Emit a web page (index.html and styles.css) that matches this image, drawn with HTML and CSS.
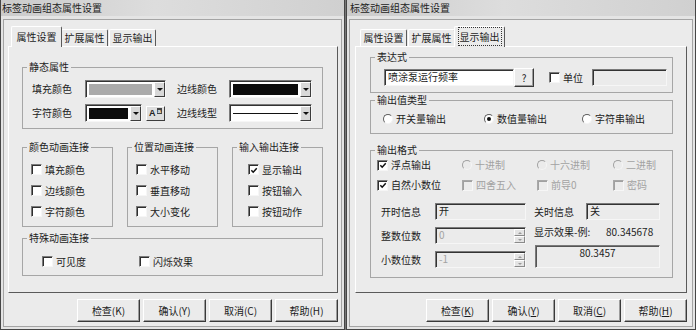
FILE: index.html
```html
<!DOCTYPE html>
<html lang="zh-CN">
<head>
    <meta charset="UTF-8">
    <meta name="viewport" content="width=device-width, initial-scale=1.0">
    <title>标签动画组态属性设置</title>
    <link rel="stylesheet" href="styles.css">
</head>
<body>
<div id="screen">
    <!-- 属性设置 -->
    <div class="win win-left">
        <div class="titlebar">标签动画组态属性设置</div>
        <div class="client">
            <ul class="tabs">
                <li class="tab on">属性设置</li>
                <li class="tab">扩展属性</li>
                <li class="tab">显示输出</li>
            </ul>
            <div class="panel">
                <fieldset class="grp">
                    <legend>静态属性</legend>
                    <div class="static-grid">
                        <span>填充颜色</span>
                        <div class="combo"><span class="swatch fill-gray"></span><span class="drop"></span></div>
                        <span class="lab2">边线颜色</span>
                        <div class="combo"><span class="swatch fill-black"></span><span class="drop"></span></div>
                        <span>字符颜色</span>
                        <div class="combo-wrap">
                            <div class="combo short"><span class="swatch fill-black"></span><span class="drop"></span></div>
                            <button class="abtn">A<span class="sup">a</span></button>
                        </div>
                        <span class="lab2">边线线型</span>
                        <div class="combo"><span class="swatch fill-line"></span><span class="drop"></span></div>
                    </div>
                </fieldset>
                <div class="grp-row">
                    <fieldset class="grp">
                        <legend>颜色动画连接</legend>
                        <div class="chk-list">
                            <label class="chk"><i class="box"></i>填充颜色</label>
                            <label class="chk"><i class="box"></i>边线颜色</label>
                            <label class="chk"><i class="box"></i>字符颜色</label>
                        </div>
                    </fieldset>
                    <fieldset class="grp">
                        <legend>位置动画连接</legend>
                        <div class="chk-list">
                            <label class="chk"><i class="box"></i>水平移动</label>
                            <label class="chk"><i class="box"></i>垂直移动</label>
                            <label class="chk"><i class="box"></i>大小变化</label>
                        </div>
                    </fieldset>
                    <fieldset class="grp">
                        <legend>输入输出连接</legend>
                        <div class="chk-list io">
                            <label class="chk"><i class="box"><svg viewBox="0 0 9 9"><path d="M1.5 4.2 L3.6 6.4 L7.6 2" fill="none" stroke="#111" stroke-width="1.7"/></svg></i>显示输出</label>
                            <label class="chk"><i class="box"></i>按钮输入</label>
                            <label class="chk"><i class="box"></i>按钮动作</label>
                        </div>
                    </fieldset>
                </div>
                <fieldset class="grp special">
                    <legend>特殊动画连接</legend>
                    <div class="special-row">
                        <label class="chk"><i class="box"></i>可见度</label>
                        <label class="chk"><i class="box"></i>闪烁效果</label>
                    </div>
                </fieldset>
            </div>
            <div class="btns">
                <button class="btn">检查(K)</button>
                <button class="btn">确认(Y)</button>
                <button class="btn">取消(C)</button>
                <button class="btn">帮助(H)</button>
            </div>
        </div>
    </div>

    <!-- 显示输出 -->
    <div class="win win-right">
        <div class="titlebar">标签动画组态属性设置</div>
        <div class="client">
            <ul class="tabs">
                <li class="tab">属性设置</li>
                <li class="tab">扩展属性</li>
                <li class="tab on"><span class="focus">显示输出</span></li>
            </ul>
            <div class="panel panel-r">
                <fieldset class="grp">
                    <legend>表达式</legend>
                    <div class="expr-row">
                        <div class="field expr">喷涂泵运行频率</div>
                        <button class="qbtn">?</button>
                        <label class="chk unit-chk"><i class="box"></i>单位</label>
                        <div class="field gray unit"></div>
                    </div>
                </fieldset>
                <fieldset class="grp type">
                    <legend>输出值类型</legend>
                    <div class="radio-row">
                        <label class="rad"><i class="dot"></i>开关量输出</label>
                        <label class="rad"><i class="dot on"></i>数值量输出</label>
                        <label class="rad"><i class="dot"></i>字符串输出</label>
                    </div>
                </fieldset>
                <fieldset class="grp fmt">
                    <legend>输出格式</legend>
                    <div class="fmt-checks">
                        <label class="chk"><i class="box"><svg viewBox="0 0 9 9"><path d="M1.5 4.2 L3.6 6.4 L7.6 2" fill="none" stroke="#111" stroke-width="1.7"/></svg></i>浮点输出</label>
                        <label class="rad off"><i class="dot"></i>十进制</label>
                        <label class="rad off"><i class="dot"></i>十六进制</label>
                        <label class="rad off"><i class="dot"></i>二进制</label>
                        <label class="chk"><i class="box"><svg viewBox="0 0 9 9"><path d="M1.5 4.2 L3.6 6.4 L7.6 2" fill="none" stroke="#111" stroke-width="1.7"/></svg></i>自然小数位</label>
                        <label class="chk off"><i class="box"></i>四舍五入</label>
                        <label class="chk off"><i class="box"></i>前导0</label>
                        <label class="chk off"><i class="box"></i>密码</label>
                    </div>
                    <div class="fmt-grid">
                        <span>开时信息</span>
                        <div class="field gray">开</div>
                        <span class="lab2">关时信息</span>
                        <div class="field gray">关</div>
                        <span>整数位数</span>
                        <div class="spin"><span class="spin-val">0</span><span class="spin-btns"><b></b><b class="down"></b></span></div>
                        <div class="sample"><span class="sample-lab">显示效果-例:</span>80.345678</div>
                        <span>小数位数</span>
                        <div class="spin"><span class="spin-val">-1</span><span class="spin-btns"><b></b><b class="down"></b></span></div>
                        <div class="result">80.3457</div>
                    </div>
                </fieldset>
            </div>
            <div class="btns">
                <button class="btn">检查(<u>K</u>)</button>
                <button class="btn">确认(<u>Y</u>)</button>
                <button class="btn">取消(<u>C</u>)</button>
                <button class="btn">帮助(<u>H</u>)</button>
            </div>
        </div>
    </div>
</div>
</body>
</html>
```

FILE: styles.css
```css
* {
    margin: 0;
    padding: 0;
    box-sizing: border-box;
}
body {
    background: #4d4d4d;
    font-family: "Noto Sans CJK SC", "Noto Sans", sans-serif;
    font-size: 10px;
    line-height: 12px;
    color: #1c1c1c;
}
#screen {
    display: flex;
    gap: 1px;
    width: 696px;
    height: 330px;
    background: #777;
}

/* 窗口 */
.win {
    display: flex;
    flex-direction: column;
    height: 330px;
    background: #e4e4e4;
    border: 1px solid #464646;
    border-top: none;
}
.win-left { width: 345px; }
.win-right { width: 350px; }
.titlebar {
    height: 16px;
    padding: 2px 0 0 1px;
    background: linear-gradient(to right, #cbcbcb, #dddddd 45%, #d0d0d0);
    color: #222;
    white-space: nowrap;
}
.win-right .titlebar { padding-left: 3px; }
.client {
    flex: 1;
    display: flex;
    flex-direction: column;
    margin: 3px 2px 2px;
    padding: 6px 3px 0 4px;
    border: 1px solid #a4a4a4;
    background: #ebebeb;
}
.win-right .client { padding: 6px 5px 0 5px; }

/* 选项卡 */
.tabs {
    display: flex;
    align-items: flex-end;
    gap: 1px;
    height: 20px;
    padding-left: 5px;
    list-style: none;
}
.tab {
    width: 47px;
    height: 17px;
    padding-top: 2px;
    text-align: center;
    white-space: nowrap;
    background: #ebebeb;
    border: 1px solid;
    border-bottom: none;
    border-color: #fff #5a5a5a #5a5a5a #fff;
    border-radius: 2px 2px 0 0;
}
.tab.on {
    position: relative;
    z-index: 1;
    width: 51px;
    height: 21px;
    margin: 0 -2px -1px;
    padding-top: 4px;
}
.focus {
    outline: 1px dotted #333;
    outline-offset: 1px;
}
.panel {
    height: 247px;
    padding: 14px 14px 0 13px;
    background: #ebebeb;
    border: 1px solid;
    border-color: #fff #5a5a5a #5a5a5a #fff;
}
.panel-r { padding: 4px 13px 0 14px; }

/* 分组框 */
.grp {
    min-width: 0;
    border: 1px solid #a6a6a6;
}
.grp legend {
    margin-left: 4px;
    padding: 0 2px;
    line-height: 12px;
}
.static-grid {
    display: grid;
    grid-template-columns: 53px 81px 63px 83px;
    grid-auto-rows: 18px;
    row-gap: 6px;
    align-items: center;
    padding: 7px 9px 6px 9px;
}
.static-grid .lab2 { padding-left: 11px; }
.grp-row {
    display: grid;
    grid-template-columns: repeat(3, 1fr);
    column-gap: 14px;
    margin-top: 12px;
}
.chk-list {
    display: flex;
    flex-direction: column;
    gap: 6px;
    padding: 9px 0 7px 8px;
}
.chk-list.io { padding-left: 15px; }
.special { margin-top: 5px; }
.special-row {
    display: grid;
    grid-template-columns: 97px auto;
    padding: 10px 0 6px 19px;
}

/* 复选框 / 单选框 */
.chk {
    display: flex;
    align-items: center;
    height: 15px;
    white-space: nowrap;
}
.box {
    display: flex;
    align-items: center;
    justify-content: center;
    flex: none;
    width: 11px;
    height: 11px;
    margin-right: 3px;
    background: #fff;
    border: 1px solid;
    border-color: #7a7a7a #f6f6f6 #f6f6f6 #7a7a7a;
    box-shadow: inset 1px 1px 0 #2e2e2e;
}
.box svg {
    width: 9px;
    height: 9px;
    margin: 1px 0 0 1px;
}
.rad {
    display: flex;
    align-items: center;
    height: 14px;
    white-space: nowrap;
}
.dot {
    display: flex;
    align-items: center;
    justify-content: center;
    flex: none;
    width: 10px;
    height: 10px;
    margin-right: 3px;
    background: #fff;
    border: 1px solid;
    border-color: #5e5e5e #f4f4f4 #f4f4f4 #5e5e5e;
    border-radius: 50%;
}
.dot.on::after {
    content: "";
    width: 4px;
    height: 4px;
    border-radius: 50%;
    background: #111;
}
.off { color: #a2a2a2; }
.off .box {
    background: #ebebeb;
    border-color: #a8a8a8 #f6f6f6 #f6f6f6 #a8a8a8;
    box-shadow: inset 1px 1px 0 #a0a0a0;
}
.off .dot {
    background: #ebebeb;
    border-color: #a0a0a0 #f4f4f4 #f4f4f4 #a0a0a0;
}

/* 下拉框 */
.combo {
    display: flex;
    height: 18px;
    padding: 1px 0 0 1px;
    background: #fff;
    border: 1px solid;
    border-color: #7a7a7a #f6f6f6 #f6f6f6 #7a7a7a;
    box-shadow: inset 1px 1px 0 #333;
}
.combo.short { width: 57px; }
.swatch {
    flex: 1;
    margin: 2px;
}
.fill-gray { background: #ababab; }
.fill-black { background: #0c0c0c; }
.fill-line { background: linear-gradient(#fff 5px, #111 5px, #111 6px, #fff 6px); }
.drop {
    display: flex;
    align-items: center;
    justify-content: center;
    width: 11px;
    background: #d8d8d8;
    border: 1px solid;
    border-color: #fff #3c3c3c #3c3c3c #fff;
}
.drop::after {
    content: "";
    border-top: 3px solid #111;
    border-left: 3px solid transparent;
    border-right: 3px solid transparent;
}
.combo-wrap {
    display: flex;
    align-items: center;
    gap: 4px;
}
.abtn {
    width: 19px;
    height: 15px;
    font: bold 9px/11px "Liberation Sans", sans-serif;
    color: #222;
    background: #dedede;
    border: 1px solid;
    border-color: #fff #3c3c3c #3c3c3c #fff;
}
.abtn .sup {
    display: inline-block;
    vertical-align: top;
    margin-left: 1px;
    padding: 0 1px;
    font-size: 6px;
    line-height: 6px;
    color: #fff;
    background: #444;
}

/* 文本框 */
.field {
    height: 17px;
    padding: 1px 0 0 3px;
    white-space: nowrap;
    background: #fff;
    border: 1px solid;
    border-color: #7a7a7a #f6f6f6 #f6f6f6 #7a7a7a;
    box-shadow: inset 1px 1px 0 #333;
}
.field.gray { background: #ebebeb; }
.expr-row {
    display: flex;
    align-items: center;
    padding: 5px 0 5px 13px;
}
.expr { width: 130px; }
.qbtn {
    width: 20px;
    height: 19px;
    font: inherit;
    color: inherit;
    background: #ebebeb;
    border: 1px solid;
    border-color: #fff #3a3a3a #3a3a3a #fff;
    box-shadow: inset -1px -1px 0 #9c9c9c;
}
.unit-chk { margin-left: 15px; }
.unit {
    width: 75px;
    margin-left: 9px;
}
.type { margin-top: 1px; }
.radio-row {
    display: grid;
    grid-template-columns: 101px 98px auto;
    padding: 6px 0 7px 12px;
}
.fmt { margin-top: 10px; }
.fmt-checks {
    display: grid;
    grid-template-columns: 85px 75px 76px auto;
    row-gap: 6px;
    padding: 2px 0 0 6px;
}
.fmt-checks .chk { height: 14px; }
.fmt-grid {
    display: grid;
    grid-template-columns: 54px 91px 60px 74px;
    grid-auto-rows: 17px;
    row-gap: 7px;
    align-items: center;
    margin-top: 11px;
    padding: 0 0 9px 10px;
}
.fmt-grid .lab2 { padding-left: 8px; }
.spin {
    display: flex;
    height: 17px;
    padding-left: 3px;
    color: #a2a2a2;
    background: #ebebeb;
    border: 1px solid;
    border-color: #7a7a7a #f6f6f6 #f6f6f6 #7a7a7a;
    box-shadow: inset 1px 1px 0 #333;
}
.spin-val {
    flex: 1;
    padding-top: 1px;
}
.spin-btns {
    display: flex;
    flex-direction: column;
    width: 11px;
    padding-top: 1px;
}
.spin-btns b {
    display: flex;
    align-items: center;
    justify-content: center;
    flex: 1;
    background: #e4e4e4;
    border: 1px solid;
    border-color: #fff #8a8a8a #8a8a8a #fff;
}
.spin-btns b::after {
    content: "";
    border-bottom: 2px solid #9a9a9a;
    border-left: 2px solid transparent;
    border-right: 2px solid transparent;
}
.spin-btns b.down::after {
    border-bottom: none;
    border-top: 2px solid #9a9a9a;
}
.sample {
    grid-column: 3 / 5;
    align-self: start;
    display: flex;
    margin-top: -1px;
    padding-left: 8px;
    white-space: nowrap;
}
.sample-lab { width: 72px; }
.result {
    grid-column: 3 / 5;
    align-self: stretch;
    margin: -6px 0 0 9px;
    padding-top: 1px;
    text-align: center;
    background: #ebebeb;
    border: 1px solid;
    border-color: #7a7a7a #f6f6f6 #f6f6f6 #7a7a7a;
    box-shadow: inset 1px 1px 0 #555;
}

/* 按钮 */
.btns {
    display: flex;
    justify-content: flex-end;
    gap: 3px;
    margin-top: 6px;
}
.btn {
    width: 63px;
    height: 23px;
    font: inherit;
    color: inherit;
    background: #ebebeb;
    border: 1px solid;
    border-color: #fff #3a3a3a #3a3a3a #fff;
    box-shadow: inset -1px -1px 0 #9c9c9c;
}
```
